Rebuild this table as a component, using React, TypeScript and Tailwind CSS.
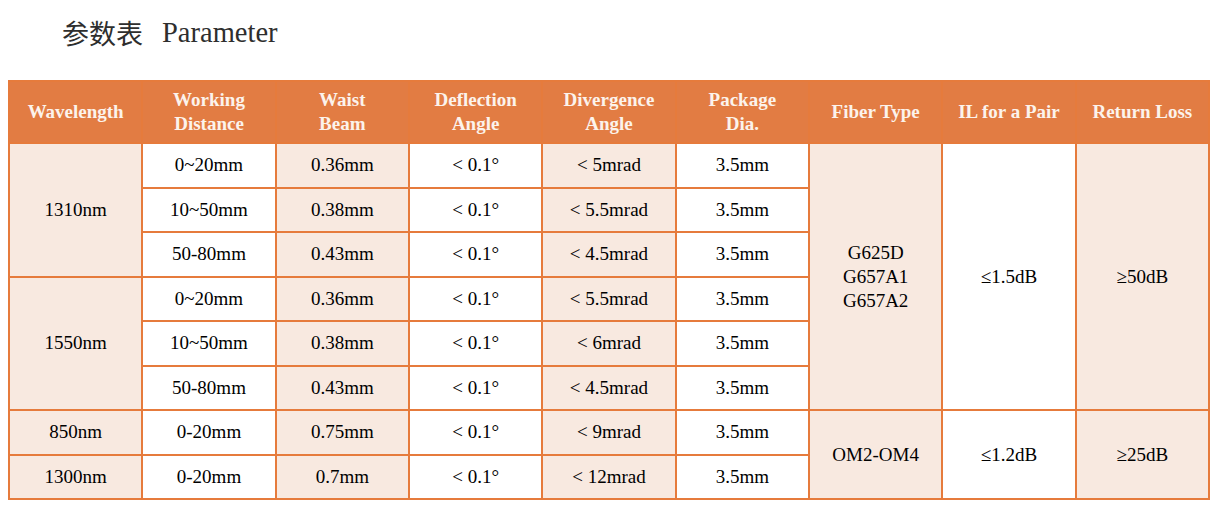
const peach = "bg-[#f8e9e0]";
const white = "bg-white";
const cell = "border-2 border-[#e67b3c] text-center align-middle";

type Row = { dist: string; waist: string; div: string };

const groups: { wave: string; rows: Row[] }[] = [
  {
    wave: "1310nm",
    rows: [
      { dist: "0~20mm", waist: "0.36mm", div: "< 5mrad" },
      { dist: "10~50mm", waist: "0.38mm", div: "< 5.5mrad" },
      { dist: "50-80mm", waist: "0.43mm", div: "< 4.5mrad" },
    ],
  },
  {
    wave: "1550nm",
    rows: [
      { dist: "0~20mm", waist: "0.36mm", div: "< 5.5mrad" },
      { dist: "10~50mm", waist: "0.38mm", div: "< 6mrad" },
      { dist: "50-80mm", waist: "0.43mm", div: "< 4.5mrad" },
    ],
  },
];

const multimode = [
  { wave: "850nm", dist: "0-20mm", waist: "0.75mm", div: "< 9mrad" },
  { wave: "1300nm", dist: "0-20mm", waist: "0.7mm", div: "< 12mrad" },
];

const headers = [
  ["Wavelength"],
  ["Working", "Distance"],
  ["Waist", "Beam"],
  ["Deflection", "Angle"],
  ["Divergence", "Angle"],
  ["Package", "Dia."],
  ["Fiber Type"],
  ["IL for a Pair"],
  ["Return Loss"],
];

export default function App() {
  return (
    <div className="h-[516px] w-[1226px] bg-white font-['Liberation_Serif','Noto_Sans_CJK_SC',serif]">
      <h1 className="flex gap-[19px] pl-[62px] pt-[15px] text-[27px] leading-[36px] text-[#2e2e2e]">
        <span className="font-['Noto_Sans_CJK_SC',sans-serif] font-normal">参数表</span>
        <span className="text-[28.5px]">Parameter</span>
      </h1>
      <table className="ml-[8px] mt-[29px] w-[1202px] table-fixed border-collapse text-[19px] leading-[24px] text-black">
        <thead>
          <tr className="h-[62px] bg-[#e27c43]">
            {headers.map((lines) => (
              <th key={lines.join(" ")} className={`${cell} font-bold text-[#fcf3ec]`}>
                {lines.map((l) => (
                  <div key={l}>{l}</div>
                ))}
              </th>
            ))}
          </tr>
        </thead>
        <tbody>
          {groups.map((g, gi) =>
            g.rows.map((r, ri) => (
              <tr key={g.wave + ri} className="h-[44.5px]">
                {ri === 0 && (
                  <td rowSpan={3} className={`${cell} ${peach}`}>
                    {g.wave}
                  </td>
                )}
                <td className={`${cell} ${white}`}>{r.dist}</td>
                <td className={`${cell} ${peach}`}>{r.waist}</td>
                <td className={`${cell} ${white}`}>&lt; 0.1°</td>
                <td className={`${cell} ${peach}`}>{r.div}</td>
                <td className={`${cell} ${white}`}>3.5mm</td>
                {gi === 0 && ri === 0 && (
                  <>
                    <td rowSpan={6} className={`${cell} ${peach}`}>
                      <div>G625D</div>
                      <div>G657A1</div>
                      <div>G657A2</div>
                    </td>
                    <td rowSpan={6} className={`${cell} ${white}`}>≤1.5dB</td>
                    <td rowSpan={6} className={`${cell} ${peach}`}>≥50dB</td>
                  </>
                )}
              </tr>
            ))
          )}
          {multimode.map((m, i) => (
            <tr key={m.wave} className="h-[44.5px]">
              <td className={`${cell} ${peach}`}>{m.wave}</td>
              <td className={`${cell} ${white}`}>{m.dist}</td>
              <td className={`${cell} ${peach}`}>{m.waist}</td>
              <td className={`${cell} ${white}`}>&lt; 0.1°</td>
              <td className={`${cell} ${peach}`}>{m.div}</td>
              <td className={`${cell} ${white}`}>3.5mm</td>
              {i === 0 && (
                <>
                  <td rowSpan={2} className={`${cell} ${peach}`}>OM2-OM4</td>
                  <td rowSpan={2} className={`${cell} ${white}`}>≤1.2dB</td>
                  <td rowSpan={2} className={`${cell} ${peach}`}>≥25dB</td>
                </>
              )}
            </tr>
          ))}
        </tbody>
      </table>
    </div>
  );
}
